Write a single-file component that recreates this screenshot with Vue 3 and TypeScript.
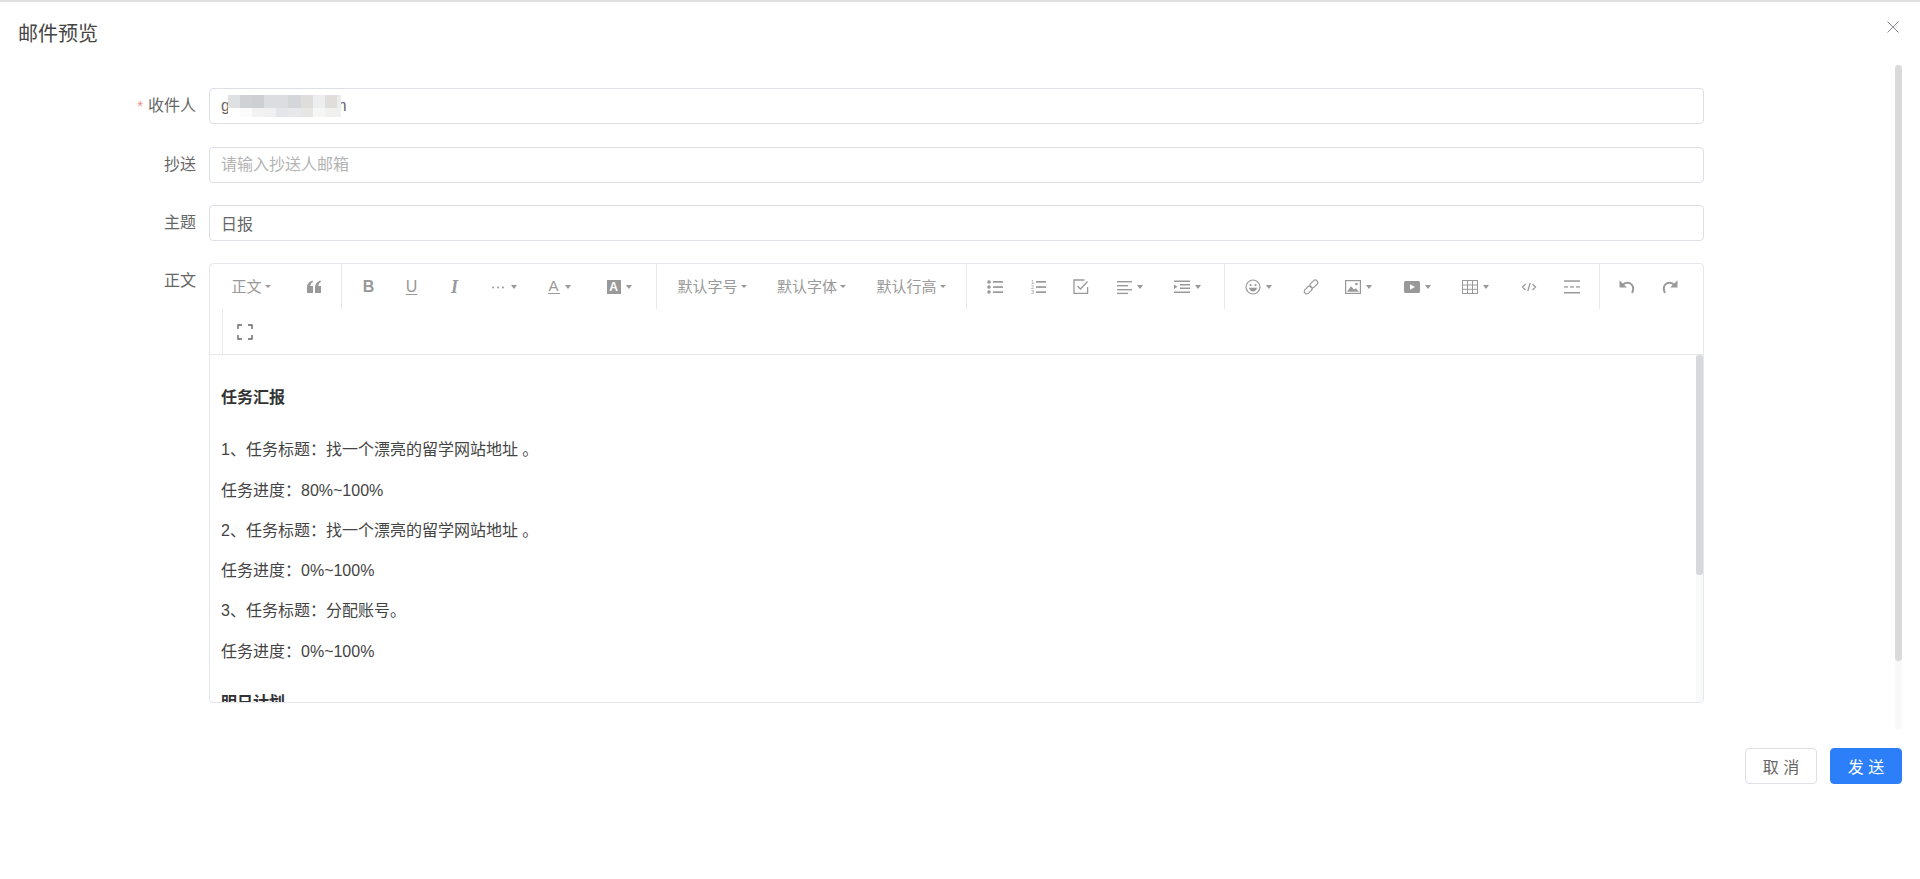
<script setup lang="ts">
import { ref } from 'vue'

type Item =
  | { kind: 'div'; ml: number }
  | { kind: 'btn'; w: number; ml?: number; label?: string; icon?: string; caret?: boolean; small?: boolean; glyph?: string }

const recipient = ref('gr@example.com')
const subject = ref('日报')

const row1: Item[] = [
  { kind: 'btn', w: 82, label: '正文', caret: true, small: true },
  { kind: 'btn', w: 44, icon: 'quote' },
  { kind: 'div', ml: 5 },
  { kind: 'btn', w: 43, ml: 5, glyph: 'b' },
  { kind: 'btn', w: 43, glyph: 'u' },
  { kind: 'btn', w: 43, glyph: 'i' },
  { kind: 'btn', w: 55, icon: 'more', caret: true },
  { kind: 'btn', w: 56, glyph: 'a', caret: true },
  { kind: 'btn', w: 64, glyph: 'bg', caret: true },
  { kind: 'div', ml: 5 },
  { kind: 'btn', w: 100, ml: 5, label: '默认字号', caret: true, small: true },
  { kind: 'btn', w: 99, label: '默认字体', caret: true, small: true },
  { kind: 'btn', w: 100, label: '默认行高', caret: true, small: true },
  { kind: 'div', ml: 5 },
  { kind: 'btn', w: 43, ml: 6, icon: 'ul' },
  { kind: 'btn', w: 43, icon: 'ol' },
  { kind: 'btn', w: 43, icon: 'check' },
  { kind: 'btn', w: 55, icon: 'align', caret: true },
  { kind: 'btn', w: 60, icon: 'indent', caret: true },
  { kind: 'div', ml: 7 },
  { kind: 'btn', w: 56, ml: 5, icon: 'smile', caret: true },
  { kind: 'btn', w: 49, icon: 'link' },
  { kind: 'btn', w: 47, icon: 'image', caret: true },
  { kind: 'btn', w: 71, icon: 'video', caret: true },
  { kind: 'btn', w: 45, icon: 'table', caret: true },
  { kind: 'btn', w: 62, icon: 'code' },
  { kind: 'btn', w: 23, icon: 'hr' },
  { kind: 'div', ml: 16 },
  { kind: 'btn', w: 43, ml: 5, icon: 'undo' },
  { kind: 'btn', w: 43, icon: 'redo' },
]

const mosaic = [
  '#dfe0e4', '#cfd1d4', '#cdcfd2', '#dcdde0', '#dcdde0', '#d4d6da', '#dedddb', '#eceef0', '#e0dedc', '#ececec',
  '#ffffff', '#fbfbfb', '#f2f2f2', '#f0f0f0', '#e4e5e8', '#e8e8ea', '#e6e6e4', '#f6f6f6', '#f0f0ee', '#f0f0ee',
]

const paragraphs = [
  { tag: 'h', text: '任务汇报' },
  { tag: 'p', text: '1、任务标题：找一个漂亮的留学网站地址 。' },
  { tag: 'p', text: '任务进度：80%~100%' },
  { tag: 'p', text: '2、任务标题：找一个漂亮的留学网站地址 。' },
  { tag: 'p', text: '任务进度：0%~100%' },
  { tag: 'p', text: '3、任务标题：分配账号。' },
  { tag: 'p', text: '任务进度：0%~100%' },
  { tag: 'h', text: '明日计划' },
]
</script>

<template>
  <div class="dialog">
    <header class="head">
      <span class="title">邮件预览</span>
      <svg class="close" width="12" height="12" viewBox="0 0 12 12" aria-label="关闭">
        <path d="M.5.5l11 11M11.5.5l-11 11" stroke="currentColor" stroke-width="1" fill="none" />
      </svg>
    </header>

    <main class="body">
      <form class="form" @submit.prevent>
        <div class="row">
          <label class="label"><i class="star">*</i>收件人</label>
          <div class="control">
            <input v-model="recipient" class="input" />
            <div class="mosaic">
              <span v-for="(c, i) in mosaic" :key="i" :style="{ background: c }"></span>
            </div>
          </div>
        </div>
        <div class="row">
          <label class="label">抄送</label>
          <div class="control"><input class="input" placeholder="请输入抄送人邮箱" /></div>
        </div>
        <div class="row">
          <label class="label">主题</label>
          <div class="control"><input v-model="subject" class="input" /></div>
        </div>
        <div class="row last">
          <label class="label">正文</label>
          <div class="control editor">
            <div class="toolbar">
              <div class="bar-row">
                <template v-for="(it, i) in row1" :key="i">
                  <span v-if="it.kind === 'div'" class="divider" :style="{ marginLeft: it.ml + 'px' }"></span>
                  <span v-else class="tool" :style="{ width: it.w + 'px', marginLeft: (it.ml || 0) + 'px' }">
                    <span v-if="it.label" class="tool-label">{{ it.label }}</span>
                    <span v-if="it.glyph === 'b'" class="g g-b">B</span>
                    <span v-if="it.glyph === 'u'" class="g g-u">U</span>
                    <span v-if="it.glyph === 'i'" class="g g-i">I</span>
                    <span v-if="it.glyph === 'a'" class="g g-a">A</span>
                    <span v-if="it.glyph === 'bg'" class="g g-bg">A</span>
                    <svg v-if="it.icon" class="ic" width="16" height="16" viewBox="0 0 16 16">
                      <g v-if="it.icon === 'quote'" fill="currentColor">
                        <path d="M1 14V9c0-3.500 1.500-6 5.500-7.500l.5 1.500C5.300 3.800 4.500 5 4.400 7H7v7zM9 14V9c0-3.500 1.500-6 5.500-7.500l.5 1.500C13.300 3.800 12.500 5 12.400 7H15v7z" />
                      </g>
                      <g v-else-if="it.icon === 'more'" fill="currentColor">
                        <circle cx="3" cy="8.500" r="1" /><circle cx="8" cy="8.500" r="1" /><circle cx="13" cy="8.500" r="1" />
                      </g>
                      <g v-else-if="it.icon === 'ul'" fill="currentColor">
                        <circle cx="2" cy="3" r="1.800" /><circle cx="2" cy="8" r="1.800" /><circle cx="2" cy="13" r="1.800" />
                        <rect x="6" y="2" width="10" height="1.700" /><rect x="6" y="7.200" width="10" height="1.700" /><rect x="6" y="12.300" width="10" height="1.700" />
                      </g>
                      <g v-else-if="it.icon === 'ol'" fill="currentColor">
                        <text x="1" y="5" class="ol-num">1</text><text x="1" y="10" class="ol-num">2</text><text x="1" y="15" class="ol-num">3</text>
                        <rect x="6" y="2" width="10" height="1.700" /><rect x="6" y="7.200" width="10" height="1.700" /><rect x="6" y="12.300" width="10" height="1.700" />
                      </g>
                      <g v-else-if="it.icon === 'check'" fill="none" stroke="currentColor" stroke-width="1.300">
                        <path d="M14.600 8v6.400H1V1h10.500" />
                        <path d="M4.500 7l3 3 7-7.500" />
                      </g>
                      <g v-else-if="it.icon === 'align'" fill="currentColor">
                        <rect x="1" y="2" width="15" height="1.400" /><rect x="1" y="6" width="11" height="1.400" /><rect x="1" y="10" width="15" height="1.400" /><rect x="1" y="13.700" width="11" height="1.400" />
                      </g>
                      <g v-else-if="it.icon === 'indent'" fill="currentColor">
                        <rect x="0" y="1.500" width="16" height="1.500" /><rect x="6" y="5" width="10" height="1.500" /><rect x="6" y="8.500" width="10" height="1.500" /><rect x="0" y="12.500" width="16" height="1.500" />
                        <path d="M0 5.500l3.500 2.300L0 10z" />
                      </g>
                      <g v-else-if="it.icon === 'smile'">
                        <circle cx="8" cy="8" r="7" fill="none" stroke="currentColor" stroke-width="1.200" />
                        <circle cx="5.500" cy="6" r="1.100" fill="currentColor" /><circle cx="10.500" cy="6" r="1.100" fill="currentColor" />
                        <path d="M4 8.800h8c-.3 2.400-2 3.700-4 3.700s-3.700-1.300-4-3.700z" fill="currentColor" />
                      </g>
                      <g v-else-if="it.icon === 'link'" fill="none" stroke="currentColor" stroke-width="1.200">
                        <rect x="6.300" y="2.500" width="9" height="5" rx="2.500" transform="rotate(-45 10.800 5)" />
                        <rect x=".7" y="8.500" width="9" height="5" rx="2.500" transform="rotate(-45 5.200 11)" />
                      </g>
                      <g v-else-if="it.icon === 'image'">
                        <rect x=".6" y="1.600" width="14.800" height="12.800" fill="none" stroke="currentColor" stroke-width="1.200" />
                        <path d="M2 12.800l4-5.500 3 3.300 1.800-1.300 3.200 3.500z" fill="currentColor" />
                        <circle cx="11.500" cy="5" r="1.300" fill="currentColor" />
                      </g>
                      <g v-else-if="it.icon === 'video'">
                        <path d="M1.500 2h13A1.500 1.500 0 0 1 16 3.500v9a1.500 1.500 0 0 1-1.500 1.500h-13A1.500 1.500 0 0 1 0 12.500v-9A1.500 1.500 0 0 1 1.500 2z" fill="currentColor" />
                        <path d="M6 5.200l5 2.800-5 2.800z" fill="#fff" />
                      </g>
                      <g v-else-if="it.icon === 'table'" fill="none" stroke="currentColor" stroke-width="1">
                        <rect x=".5" y="1.500" width="15" height="13" />
                        <path d="M.5 6h15M.5 10.300h15M5.500 1.500v13M10.500 1.500v13" />
                      </g>
                      <g v-else-if="it.icon === 'code'" fill="none" stroke="currentColor" stroke-width="1.300">
                        <path d="M4.500 5l-3 3 3 3M11.500 5l3 3-3 3M9.200 4L6.800 12" />
                      </g>
                      <g v-else-if="it.icon === 'hr'" fill="currentColor">
                        <rect x="0" y="1.300" width="16" height="1.500" /><rect x="0" y="13" width="16" height="1.500" />
                        <rect x="0" y="7.300" width="4" height="1.300" /><rect x="6" y="7.300" width="4" height="1.300" /><rect x="12" y="7.300" width="4" height="1.300" />
                      </g>
                      <g v-else-if="it.icon === 'undo'" fill="none" stroke="currentColor" stroke-width="2">
                        <path d="M3.500 6C5 4.300 7 3.500 9 3.700c3 .4 5.200 3 5.200 5.800 0 1.500-.4 3-1.200 4.500" />
                        <path d="M.5 1.200v7.300h7.300z" fill="currentColor" stroke="none" />
                      </g>
                      <g v-else-if="it.icon === 'redo'" fill="none" stroke="currentColor" stroke-width="2">
                        <path d="M12.500 6C11 4.300 9 3.500 7 3.700 4 4.100 1.800 6.700 1.800 9.500c0 1.500.4 3 1.200 4.500" />
                        <path d="M15.500 1.200v7.300H8.200z" fill="currentColor" stroke="none" />
                      </g>
                    </svg>
                    <i v-if="it.caret" class="caret" :class="{ small: it.small }"></i>
                  </span>
                </template>
              </div>
              <div class="bar-row second">
                <span class="tool full">
                  <svg width="16" height="16" viewBox="0 0 16 16" fill="none" stroke="#666" stroke-width="1.400">
                    <path d="M1 5V1h4M11 1h4v4M15 11v4h-4M5 15H1v-4" />
                  </svg>
                </span>
              </div>
            </div>
            <div class="content">
              <template v-for="(p, i) in paragraphs" :key="i">
                <h3 v-if="p.tag === 'h'" class="h">{{ p.text }}</h3>
                <p v-else class="p">{{ p.text }}</p>
              </template>
            </div>
            <div class="inner-track"><div class="inner-thumb"></div></div>
          </div>
        </div>
      </form>
      <div class="track"><div class="thumb"></div></div>
    </main>

    <footer class="foot">
      <button type="button" class="btn">取 消</button>
      <button type="button" class="btn primary">发 送</button>
    </footer>
  </div>
</template>

<style>
html, body { margin: 0; background: #fff; overflow: hidden; }
</style>

<style scoped>
.dialog {
  height: 879px;
  box-sizing: border-box;
  display: flex;
  flex-direction: column;
  background: #fff;
  border-top: 2px solid #e0e0e0;
  font-family: "Liberation Sans", "Noto Sans CJK SC", sans-serif;
  color: #666;
  font-size: 16px;
}
.head {
  height: 63px;
  flex: none;
  display: flex;
  align-items: flex-start;
  justify-content: space-between;
  padding: 20px 21px 0 18px;
  box-sizing: border-box;
}
.title { font-size: 20px; line-height: 24px; color: #444; }
.close { color: #8a8d93; margin-top: -1px; }
.body {
  position: relative;
  height: 664px;
  flex: none;
  overflow: hidden;
  box-sizing: border-box;
  padding: 23.400px 216px 0 0;
}
.form { display: flex; flex-direction: column; gap: 22.300px; }
.row { display: flex; }
.label {
  flex: none;
  width: 196px;
  box-sizing: border-box;
  text-align: right;
  line-height: 36px;
  color: #666;
}
.star { color: #e88; font-style: normal; margin-right: 5px; font-size: 14px; }
.control { flex: 1; margin-left: 13px; position: relative; min-width: 0; }
.input {
  display: block;
  width: 100%;
  height: 36px;
  box-sizing: border-box;
  border: 1px solid #dcdfe6;
  border-radius: 4px;
  padding: 0 11px;
  font: inherit;
  color: #666;
  outline: none;
  background: #fff;
}
.input::placeholder { color: #b3b3b3; opacity: 1; }
.mosaic {
  position: absolute;
  left: 19px;
  top: 7px;
  width: 113px;
  height: 22px;
  overflow: hidden;
  display: grid;
  grid-template-columns: repeat(10, 12.100px);
  grid-template-rows: 13px 9px;
}
.editor {
  height: 440px;
  box-sizing: border-box;
  border: 1px solid #e4e7ed;
  border-radius: 4px;
  display: flex;
  flex-direction: column;
  overflow: hidden;
}
.toolbar { flex: none; height: 90px; border-bottom: 1px solid #e8e8e8; }
.bar-row { display: flex; height: 45px; align-items: stretch; }
.bar-row.second { padding-left: 12px; }
.divider { flex: none; width: 1px; background: #e8e8e8; }
.tool {
  flex: none;
  display: inline-flex;
  align-items: center;
  justify-content: center;
  gap: 5px;
  color: #999;
}
.tool.full {
  width: 43px;
  border-left: 1px solid #e8e8e8;
}
.tool-label { font-size: 15px; color: #999; line-height: 16px; }
.caret {
  width: 0;
  height: 0;
  border-left: 3.500px solid transparent;
  border-right: 3.500px solid transparent;
  border-top: 4px solid #999;
}
.caret.small { margin-left: -2px; border-left-width: 3px; border-right-width: 3px; border-top-width: 3px; }
.ic { flex: none; }
.ol-num { font-family: "Liberation Sans", sans-serif; font-size: 5.500px; }
.g { font-family: "Liberation Sans", sans-serif; color: #999; line-height: 16px; font-size: 16px; display: inline-block; }
.g-b { font-weight: 700; }
.g-u { text-decoration: underline; text-underline-offset: 2px; }
.g-i { font-family: "Liberation Serif", serif; font-style: italic; font-weight: 700; font-size: 18px; }
.g-a { border-bottom: 1.500px solid #999; line-height: 14px; width: 12px; font-size: 15px; text-align: center; }
.g-bg {
  background: #999;
  color: #fff;
  width: 14px;
  height: 14px;
  line-height: 14px;
  font-size: 12px;
  font-weight: 700;
  text-align: center;
}
.content {
  flex: 1;
  min-height: 0;
  overflow: hidden;
  padding: 31px 11px 0;
  color: #444;
}
.h { margin: 0 0 28px; font-size: 16px; line-height: 24px; font-weight: 700; color: #333; }
.p { margin: 0 0 16.300px; line-height: 24px; }
.p + .h { margin-top: 27px; }
.inner-track {
  position: absolute;
  right: 0;
  top: 91px;
  bottom: 0;
  width: 7px;
  background: #f8f9f9;
}
.inner-thumb { height: 220px; background: #d6d8dc; border-radius: 3px; }
.track {
  position: absolute;
  right: 18px;
  top: 0;
  bottom: 0;
  width: 7px;
  background: #f9f9f9;
}
.thumb { height: 596px; background: #dadada; border-radius: 4px; }
.foot {
  flex: 1;
  display: flex;
  justify-content: flex-end;
  align-items: flex-start;
  gap: 13px;
  padding: 19px 18px 0 0;
}
.btn {
  width: 72px;
  height: 36px;
  box-sizing: border-box;
  border: 1px solid #dcdfe6;
  border-radius: 4px;
  background: #fff;
  color: #666;
  font: inherit;
  padding: 0;
}
.btn.primary { background: #2d7ff9; border-color: #2d7ff9; color: #fff; }
</style>
